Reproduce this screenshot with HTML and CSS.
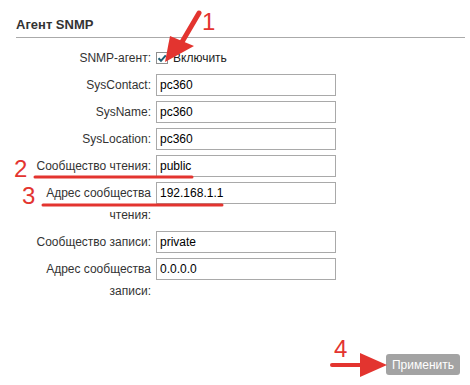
FILE: index.html
```html
<!DOCTYPE html>
<html lang="ru">
<head>
  <meta charset="UTF-8" />
  <title>Агент SNMP</title>
  <meta name="viewport" content="width=device-width, initial-scale=1" />
  <link rel="stylesheet" href="styles.css">
</head>
<body>
  <div class="panel">
    <h2 class="title">Агент SNMP</h2>

    <div class="form">
      <label class="lbl">SNMP-агент:</label>
      <div class="field">
        <span class="check">
          <svg width="10" height="10" viewBox="0 0 10 10"><path d="M1.5 5.2 L4 7.8 L8.8 2.4" fill="none" stroke="#1f5d73" stroke-width="2"/></svg>
        </span>
        <span>Включить</span>
      </div>

      <label class="lbl">SysContact:</label>
      <input class="inp" type="text" value="pc360" />

      <label class="lbl">SysName:</label>
      <input class="inp" type="text" value="pc360" />

      <label class="lbl">SysLocation:</label>
      <input class="inp" type="text" value="pc360" />

      <label class="lbl">Сообщество чтения:</label>
      <input class="inp" type="text" value="public" />

      <label class="lbl">Адрес сообщества чтения:</label>
      <input class="inp" type="text" value="192.168.1.1" />

      <label class="lbl">Сообщество записи:</label>
      <input class="inp" type="text" value="private" />

      <label class="lbl">Адрес сообщества записи:</label>
      <input class="inp" type="text" value="0.0.0.0" />
    </div>

    <div class="actions">
      <button class="btn-apply">Применить</button>
    </div>
  </div>

  <!-- пометки поверх скриншота -->
  <svg class="marks" width="470" height="385" viewBox="0 0 470 385">
    <line x1="199" y1="13" x2="182" y2="42" stroke="#e3342f" stroke-width="5" stroke-linecap="round"/>
    <polygon points="165,62 170,36 194,46" fill="#e3342f"/>
    <line x1="35" y1="177" x2="192" y2="177" stroke="#e3342f" stroke-width="3" stroke-linecap="round"/>
    <line x1="43" y1="205" x2="222" y2="205" stroke="#e3342f" stroke-width="3" stroke-linecap="round"/>
    <line x1="332" y1="365" x2="364" y2="365" stroke="#e3342f" stroke-width="4" stroke-linecap="round"/>
    <polygon points="360,353 360,377 387,365" fill="#e3342f"/>
  </svg>
  <span class="num num-1">1</span>
  <span class="num num-2">2</span>
  <span class="num num-3">3</span>
  <span class="num num-4">4</span>
</body>
</html>
```

FILE: styles.css
```css
body {
  margin: 0;
  font-family: 'Liberation Sans', Arial, sans-serif;
  font-size: 12px;
  color: #333;
  background: #fff;
  width: 470px;
  height: 385px;
  position: relative;
  overflow: hidden;
}
.panel {
  margin: 0 5px 0 16px;
}
.title {
  margin: 0;
  padding: 17px 0 5px;
  font-size: 13px;
  line-height: 15px;
  font-weight: bold;
  color: #333;
  border-bottom: 1px solid #aaa;
}
.form {
  display: grid;
  grid-template-columns: 135px 180px;
  column-gap: 5px;
  row-gap: 5px;
  margin-top: 9px;
}
.lbl {
  text-align: right;
  line-height: 22px;
  color: #333;
}
.field {
  display: flex;
  align-items: center;
  gap: 5px;
  height: 22px;
  color: #222;
}
.check {
  width: 12px;
  height: 12px;
  box-sizing: border-box;
  border: 1px solid #8f8f8f;
  display: flex;
  align-items: center;
  justify-content: center;
  background: #fff;
}
.inp {
  box-sizing: border-box;
  width: 180px;
  height: 22px;
  margin: 0;
  border: 1px solid #a9a9a9;
  border-radius: 0;
  padding: 0 3px;
  font-family: 'Liberation Sans', Arial, sans-serif;
  font-size: 12px;
  color: #000;
  outline: none;
}
.actions {
  display: flex;
  justify-content: flex-end;
  margin-top: 52px;
  padding-right: 5px;
}
.btn-apply {
  height: 21px;
  padding: 0 6px;
  border: none;
  border-radius: 3px;
  background: #a3a3a3;
  color: #fff;
  font-family: 'Liberation Sans', Arial, sans-serif;
  font-size: 12px;
  cursor: pointer;
}
.marks {
  position: absolute;
  left: 0;
  top: 0;
}
.num {
  position: absolute;
  font-family: 'Liberation Sans', Arial, sans-serif;
  font-size: 24px;
  line-height: 24px;
  color: #e3342f;
}
.num-1 { left: 202px; top: 10px; }
.num-2 { left: 14px; top: 157px; }
.num-3 { left: 22px; top: 184px; }
.num-4 { left: 334px; top: 337px; }
```
